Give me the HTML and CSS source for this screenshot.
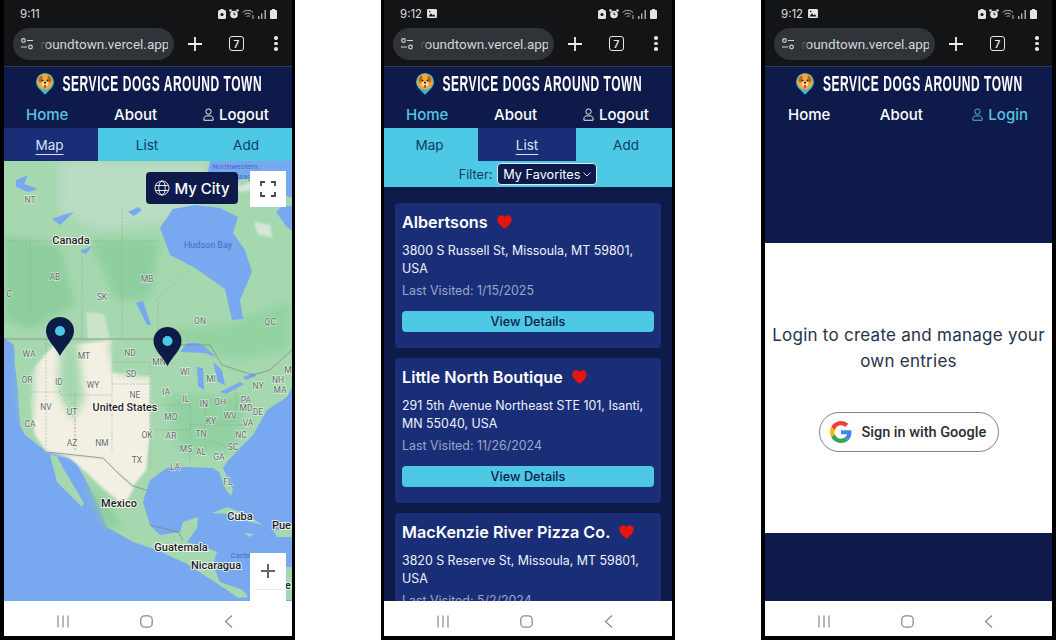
FILE: index.html
```html
<!DOCTYPE html>
<html lang="en">
<head>
    <meta charset="UTF-8">
    <meta name="viewport" content="width=device-width, initial-scale=1.0">
    <title>Service Dogs Around Town</title>
    <link rel="stylesheet" href="styles.css">
</head>
<body>
    <svg class="sprites" xmlns="http://www.w3.org/2000/svg">
        <symbol id="i-tune" viewBox="0 0 14 12">
            <circle cx="3.5" cy="2.5" r="1.8" fill="none" stroke="#cfd2d6" stroke-width="1.2"/>
            <path d="M7 2.5h6M1 9h6" stroke="#cfd2d6" stroke-width="1.2"/>
            <circle cx="10.5" cy="9" r="1.8" fill="none" stroke="#cfd2d6" stroke-width="1.2"/>
        </symbol>
        <symbol id="i-dog" viewBox="0 0 20 24">
            <path d="M10 24 2.6 16.500A10 10 0 1 1 17.400 16.500Z" fill="#3fb6c9"/>
            <circle cx="10" cy="9.500" r="8.600" fill="#f2a93b"/>
            <path d="M3 6c1.500-3 3-3.600 4-3 .6 2-.5 6-2.200 8C3.400 10.500 2.600 8 3 6ZM17 6c-1.500-3-3-3.600-4-3-.6 2 .5 6 2.200 8 1.400-.5 2.200-3 1.800-5Z" fill="#b9651f"/>
            <ellipse cx="10" cy="12" rx="3.600" ry="3" fill="#ffe1b0"/>
            <circle cx="7.200" cy="8" r="1" fill="#2a1608"/>
            <circle cx="12.800" cy="8" r="1" fill="#2a1608"/>
            <ellipse cx="10" cy="10.500" rx="1.300" ry="1" fill="#2a1608"/>
            <path d="M8.800 13h2.400v2.600a1.200 1.200 0 0 1-2.400 0Z" fill="#e4453f"/>
        </symbol>
        <symbol id="i-user" viewBox="0 0 12 14">
            <circle cx="6" cy="3.800" r="2.900" fill="none" stroke="currentColor" stroke-width="1"/>
            <path d="M1 13.300v-1.500c0-2.100 1.400-3.300 3-3.300h4c1.600 0 3 1.200 3 3.300v1.500Z" fill="none" stroke="currentColor" stroke-width="1"/>
        </symbol>
        <symbol id="i-heart" viewBox="0 0 16 15">
            <path d="M8 14.800C3 10.800 .3 8.200 .3 4.800.3 2.200 2.200.4 4.500.4 6 .4 7.300 1.200 8 2.400 8.700 1.200 10 .4 11.500.4c2.300 0 4.200 1.800 4.200 4.400 0 3.400-2.700 6-7.700 10Z" fill="#e8140f"/>
        </symbol>
        <symbol id="i-photo" viewBox="0 0 11 10">
            <rect width="11" height="10" rx="1.500" fill="#e6e6e6"/>
            <path d="M1.500 8.300 4.300 4.800l2 2.200 1.300-1.200 1.900 2.500Z" fill="#151515"/>
            <circle cx="3" cy="2.800" r=".9" fill="#151515"/>
        </symbol>
    </svg>

    <!-- map screen -->
    <section class="phone">
        <div class="status">
            <span class="clock">9:11</span>
            <span class="status-icons">
                <svg width="8" height="10" viewBox="0 0 8 10"><rect y="1" width="8" height="9" rx="1.500" fill="#e4e4e4"/><rect x="2.500" width="3" height="2" fill="#e4e4e4"/><circle cx="4" cy="5.500" r="1.600" fill="#151515"/></svg>
                <svg width="10" height="10" viewBox="0 0 10 10"><circle cx="5" cy="5.500" r="3.800" fill="#e4e4e4"/><circle cx="1.500" cy="1.500" r="1.300" fill="#e4e4e4"/><circle cx="8.500" cy="1.500" r="1.300" fill="#e4e4e4"/><path d="M5 3.500v2.200h1.500" stroke="#151515" fill="none"/></svg>
                <svg width="13" height="10" viewBox="0 0 13 10" fill="none" stroke="#bdbdbd"><path d="M.5 3.500C3.500.6 8 .6 11 3.500M2.500 5.500C4.500 3.700 7 3.700 9 5.500M4.500 7.500c1-.8 2.500-.8 3.500 0"/><path d="M11 6v4" stroke-width="1"/></svg>
                <svg width="9" height="10" viewBox="0 0 9 10"><path d="M0 10h1.500V7H0ZM3 10h1.500V4.500H3ZM6.500 10H8V1H6.500Z" fill="#a8a8a8"/></svg>
                <svg class="battery" width="7" height="10" viewBox="0 0 7 10"><rect y="1" width="7" height="9" rx="1" fill="#e4e4e4"/><rect x="2" width="3" height="2" fill="#e4e4e4"/></svg>
            </span>
        </div>
        <div class="toolbar">
            <div class="url">
                <svg class="url-icon"><use href="#i-tune"/></svg>
                <span class="url-text"><span>roundtown.vercel.app</span></span>
            </div>
            <svg class="plus" viewBox="0 0 14 14" stroke="#eee" stroke-width="1.800"><path d="M7 0v14M0 7h14"/></svg>
            <span class="tabs-count">7</span>
            <span class="dots"><i></i><i></i><i></i></span>
        </div>
        <div class="screen">
            <header class="brand">
                <svg class="logo"><use href="#i-dog"/></svg>
                <span class="brand-name">SERVICE DOGS AROUND TOWN</span>
            </header>
            <nav class="mainnav">
                <a class="active nav-home">Home</a>
                <a class="nav-about">About</a>
                <a class="nav-user"><svg class="user-icon"><use href="#i-user"/></svg>Logout</a>
            </nav>
            <div class="subtabs">
                <a class="subtab current"><u>Map</u></a>
                <a class="subtab">List</a>
                <a class="subtab">Add</a>
            </div>
            <div class="map">
                <svg class="map-art" viewBox="4 161 288 440" preserveAspectRatio="none">
                    <defs>
                        <filter id="soft"><feGaussianBlur stdDeviation="4"/></filter>
                        <filter id="softer"><feGaussianBlur stdDeviation="1.200"/></filter>
                        <filter id="edge"><feGaussianBlur stdDeviation=".5"/></filter>
                    </defs>
                    <rect x="4" y="161" width="288" height="440" fill="#78a8f0"/>
                    <!-- land -->
                    <g filter="url(#edge)" fill="#a6d8b0">
                        <path d="M4 161H292V387L287 397 267 410 263 417 253 435 240 448 227 462 223 468 233 490 231 496 226 490 219 472 213 468 187 467 167 468 150 480 146 492 143 502 150 525 160 535 180 532 183 522 198 517 197 528 187 542 207 548 217 552 213 565 220 582 243 590 248 597 238 598 227 590 207 577 187 564 157 550 133 542 107 527 100 507 77 464 66 456 53 452 47 452 25 435 20 425 18 390 15 365 14 345 4 338Z"/>
                        <path d="M50 455 57 482 82 507 84 503 63 468 57 456Z"/>
                        <path d="M212 513 227 507 243 513 263 525 250 522 232 514Z"/>
                        <path d="M273 531 292 526V537L277 537Z"/>
                        <path d="M244 533 254 534 250 537Z"/>
                        <path d="M286 567H292V600H286Z"/>
                    </g>
                    <!-- shading -->
                    <g filter="url(#soft)">
                        <path fill="#b9dcc4" d="M60 161H205V205L160 222 100 230 60 212Z"/>
                        <path fill="#8ecd9d" d="M4 235 60 245 75 305 30 330 4 320Z"/>
                        <path fill="#8fcf9f" d="M90 240H160L150 300 115 300Z"/>
                        <path fill="#93d2a1" d="M155 330 225 325 290 300V350L240 360 200 350Z"/>
                        <path fill="#92d1a2" d="M165 395H250L235 450 180 455Z"/>
                        <path fill="#8ecd9d" d="M85 480 105 500 125 530 105 525Z"/>
                    </g>
                    <path filter="url(#softer)" fill="#f4efe3" d="M30 372 52 347 112 340 112 372 150 376 150 432 146 470 133 486 104 459 47 452 35 435 30 405Z"/>
                    <path filter="url(#softer)" fill="#f4efe3" opacity=".5" d="M86 312 104 314 110 339 88 339Z"/>
                    <path filter="url(#softer)" fill="#f4efe3" d="M50 453 104 459 134 488 124 505 105 490 86 472 70 458Z"/>
                    <g filter="url(#soft)" fill="#a4d8ae">
                        <path d="M60 340 78 340 84 400 72 420 58 390Z"/>
                        <path d="M108 342H150V378L115 372Z"/>
                        <path d="M18 345 36 345 32 420 22 420Z"/>
                    </g>
                    <!-- water -->
                    <g fill="#78a8f0" filter="url(#edge)">
                        <path d="M173 209 160 228 170 255 195 268 225 289 232 320 243 319 240 300 252 272 245 250 233 233 238 217 220 208 196 205Z"/>
                        <path d="M210 161H292V198L270 190 250 178 225 182 208 172Z"/>
                        <path d="M276 212 282 206 292 206V231L286 226Z"/>
                        <path d="M16 180 28 175 24 184 38 189 28 192 16 187Z"/>
                        <path d="M52 219 66 214 74 212 60 225Z"/>
                        <path d="M80 251 92 246 86 254Z"/>
                        <path d="M136 303 143 301 151 325 147 325Z"/>
                        <path d="M187 343 198 343 205 347 216 357 205 353 180 352Z"/>
                        <path d="M197 367 203 368 204 390 198 386Z"/>
                        <path d="M213 362 222 370 225 385 218 382Z"/>
                        <path d="M220 392 240 382 244 384 226 394Z"/>
                        <path d="M243 377 254 373 256 376 246 380Z"/>
                        <path d="M128 212 138 207 142 210 134 216Z"/>
                    </g>
                    <path filter="url(#softer)" d="M232 180 240 186 250 182 256 190 240 192Z M254 222 270 225 272 238 258 234Z" fill="#d5e6d9"/>
                    <!-- borders -->
                    <g fill="none" stroke="#8c9c92" stroke-width=".5" stroke-dasharray="2 1.500">
                        <path d="M4 241H160M30 241V310M82 241V339M122 210V339M156 300 190 270M158 300V339"/>
                        <path d="M46 339V450M60 395H112M30 392H60M75 392V452M112 372V452M112 362H150M112 384H150M150 362V470M60 390 75 420M75 420V452M150 405H190M150 430H190M190 392V470M205 400V450M236 420 205 425M190 425H252M210 440 240 452M236 385V420"/>
                    </g>
                    <path d="M4 339H155L175 345 210 345 222 365 253 375 270 370 292 350M47 452 103 458 120 475 133 486 146 490M150 525 178 532 183 540" fill="none" stroke="#7d8478" stroke-width=".7"/>
                    <!-- labels -->
                    <g class="lbl-state">
                        <text x="30" y="203">NT</text><text x="55" y="280">AB</text><text x="147" y="282">MB</text><text x="102" y="300">SK</text><text x="200" y="324">ON</text><text x="270" y="325">QC</text><text x="9" y="297">C</text>
                        <text x="29" y="357">WA</text><text x="84" y="359">MT</text><text x="130" y="356">ND</text><text x="159" y="365">MN</text><text x="185" y="375">WI</text><text x="211" y="382">MI</text><text x="258" y="389">NY</text><text x="278" y="383">NH</text><text x="280" y="393">MA</text><text x="288" y="373">M</text>
                        <text x="27" y="383">OR</text><text x="59" y="385">ID</text><text x="93" y="388">WY</text><text x="131" y="377">SD</text><text x="166" y="395">IA</text><text x="186" y="402">IL</text><text x="204" y="407">IN</text><text x="220" y="405">OH</text><text x="246" y="403">PA</text><text x="246" y="411">MD</text><text x="258" y="415">DE</text><text x="135" y="398">NE</text><text x="46" y="410">NV</text><text x="72" y="415">UT</text><text x="171" y="420">MO</text><text x="230" y="419">WV</text><text x="211" y="424">KY</text><text x="248" y="426">VA</text><text x="30" y="427">CA</text>
                        <text x="72" y="446">AZ</text><text x="102" y="446">NM</text><text x="147" y="438">OK</text><text x="171" y="439">AR</text><text x="201" y="437">TN</text><text x="241" y="438">NC</text><text x="186" y="452">MS</text><text x="201" y="455">AL</text><text x="233" y="450">SC</text><text x="219" y="460">GA</text><text x="175" y="470">LA</text><text x="137" y="463">TX</text><text x="228" y="485">FL</text>
                    </g>
                    <g class="lbl-water">
                        <text x="235" y="169">Northwestern</text><text x="243" y="179">Passages</text>
                        <text x="208" y="248" class="big">Hudson Bay</text>
                        <text x="255" y="558">Caribbean Sea</text>
                    </g>
                    <g class="lbl-country">
                        <text x="71" y="244">Canada</text><text x="125" y="411" class="big">United States</text><text x="119" y="507">Mexico</text><text x="240" y="520">Cuba</text><text x="291" y="529" class="end">Pue</text><text x="181" y="551">Guatemala</text><text x="216" y="569">Nicaragua</text><text x="291" y="589" class="end">e</text>
                    </g>
                    <!-- pins -->
                    <path d="M60 317a14 14 0 0 1 14 14c0 9-9 15-14 25-5-10-14-16-14-25a14 14 0 0 1 14-14Z" fill="#0d1c45"/>
                    <circle cx="60" cy="331" r="5" fill="#4dc8e5"/>
                    <path d="M167.500 327a14 14 0 0 1 14 14c0 9-9 15-14 25-5-10-14-16-14-25a14 14 0 0 1 14-14Z" fill="#0d1c45"/>
                    <circle cx="167.500" cy="341" r="5" fill="#4dc8e5"/>
                </svg>
                <a class="mycity">
                    <svg width="16" height="16" viewBox="0 0 16 16" fill="none" stroke="#fff" stroke-width=".9"><circle cx="8" cy="8" r="7"/><ellipse cx="8" cy="8" rx="3.200" ry="7"/><path d="M1.600 5.500h12.800M1.600 10.500h12.800"/></svg>
                    My City
                </a>
                <div class="map-ctl fullscreen">
                    <svg width="16" height="16" viewBox="0 0 16 16" fill="none" stroke="#444" stroke-width="1.800"><path d="M1 5V1h4M11 1h4v4M15 11v4h-4M5 15H1v-4"/></svg>
                </div>
                <div class="map-ctl zoom">
                    <svg width="16" height="16" viewBox="0 0 16 16" fill="none" stroke="#666" stroke-width="2"><path d="M8 1v14M1 8h14"/></svg>
                </div>
            </div>
        </div>
        <div class="sysnav">
            <svg width="12" height="13" viewBox="0 0 12 13" stroke="#8b8b8b" stroke-width="1.200"><path d="M1 .5v12M6 .5v12M11 .5v12"/></svg>
            <svg width="13" height="13" viewBox="0 0 13 13" fill="none" stroke="#8b8b8b" stroke-width="1.300"><rect x=".8" y=".8" width="11.400" height="11.400" rx="3.800"/></svg>
            <svg width="9" height="13" viewBox="0 0 9 13" fill="none" stroke="#8b8b8b" stroke-width="1.200"><path d="M8 .5 1.500 6.500l6.500 6"/></svg>
        </div>
    </section>

    <!-- list screen -->
    <section class="phone phone-mid">
        <div class="status">
            <span class="clock">9:12<svg class="photo"><use href="#i-photo"/></svg></span>
            <span class="status-icons">
                <svg width="8" height="10" viewBox="0 0 8 10"><rect y="1" width="8" height="9" rx="1.500" fill="#e4e4e4"/><rect x="2.500" width="3" height="2" fill="#e4e4e4"/><circle cx="4" cy="5.500" r="1.600" fill="#151515"/></svg>
                <svg width="10" height="10" viewBox="0 0 10 10"><circle cx="5" cy="5.500" r="3.800" fill="#e4e4e4"/><circle cx="1.500" cy="1.500" r="1.300" fill="#e4e4e4"/><circle cx="8.500" cy="1.500" r="1.300" fill="#e4e4e4"/><path d="M5 3.500v2.200h1.500" stroke="#151515" fill="none"/></svg>
                <svg width="13" height="10" viewBox="0 0 13 10" fill="none" stroke="#bdbdbd"><path d="M.5 3.500C3.500.6 8 .6 11 3.500M2.500 5.500C4.500 3.700 7 3.700 9 5.500M4.500 7.500c1-.8 2.500-.8 3.500 0"/><path d="M11 6v4" stroke-width="1"/></svg>
                <svg width="9" height="10" viewBox="0 0 9 10"><path d="M0 10h1.500V7H0ZM3 10h1.500V4.500H3ZM6.500 10H8V1H6.500Z" fill="#a8a8a8"/></svg>
                <svg class="battery" width="7" height="10" viewBox="0 0 7 10"><rect y="1" width="7" height="9" rx="1" fill="#e4e4e4"/><rect x="2" width="3" height="2" fill="#e4e4e4"/></svg>
            </span>
        </div>
        <div class="toolbar">
            <div class="url">
                <svg class="url-icon"><use href="#i-tune"/></svg>
                <span class="url-text"><span>roundtown.vercel.app</span></span>
            </div>
            <svg class="plus" viewBox="0 0 14 14" stroke="#eee" stroke-width="1.800"><path d="M7 0v14M0 7h14"/></svg>
            <span class="tabs-count">7</span>
            <span class="dots"><i></i><i></i><i></i></span>
        </div>
        <div class="screen">
            <header class="brand">
                <svg class="logo"><use href="#i-dog"/></svg>
                <span class="brand-name">SERVICE DOGS AROUND TOWN</span>
            </header>
            <nav class="mainnav">
                <a class="active nav-home">Home</a>
                <a class="nav-about">About</a>
                <a class="nav-user"><svg class="user-icon"><use href="#i-user"/></svg>Logout</a>
            </nav>
            <div class="subtabs">
                <a class="subtab">Map</a>
                <a class="subtab current"><u>List</u></a>
                <a class="subtab">Add</a>
            </div>
            <div class="filter">
                <label>Filter:</label>
                <span class="select">My Favorites
                    <svg width="8" height="5" viewBox="0 0 8 5" fill="none" stroke="#d6dcef"><path d="M.5.5 4 4 7.500.5"/></svg>
                </span>
            </div>
            <div class="cards">
                <article class="card">
                    <h2>Albertsons<svg class="heart"><use href="#i-heart"/></svg></h2>
                    <p>3800 S Russell St, Missoula, MT 59801, USA</p>
                    <p class="visited">Last Visited: 1/15/2025</p>
                    <a class="details">View Details</a>
                </article>
                <article class="card">
                    <h2>Little North Boutique<svg class="heart"><use href="#i-heart"/></svg></h2>
                    <p>291 5th Avenue Northeast STE 101, Isanti, MN 55040, USA</p>
                    <p class="visited">Last Visited: 11/26/2024</p>
                    <a class="details">View Details</a>
                </article>
                <article class="card">
                    <h2>MacKenzie River Pizza Co.<svg class="heart"><use href="#i-heart"/></svg></h2>
                    <p>3820 S Reserve St, Missoula, MT 59801, USA</p>
                    <p class="visited">Last Visited: 5/2/2024</p>
                    <a class="details">View Details</a>
                </article>
            </div>
        </div>
        <div class="sysnav">
            <svg width="12" height="13" viewBox="0 0 12 13" stroke="#8b8b8b" stroke-width="1.200"><path d="M1 .5v12M6 .5v12M11 .5v12"/></svg>
            <svg width="13" height="13" viewBox="0 0 13 13" fill="none" stroke="#8b8b8b" stroke-width="1.300"><rect x=".8" y=".8" width="11.400" height="11.400" rx="3.800"/></svg>
            <svg width="9" height="13" viewBox="0 0 9 13" fill="none" stroke="#8b8b8b" stroke-width="1.200"><path d="M8 .5 1.500 6.500l6.500 6"/></svg>
        </div>
    </section>

    <!-- login screen -->
    <section class="phone phone-last">
        <div class="status">
            <span class="clock">9:12<svg class="photo"><use href="#i-photo"/></svg></span>
            <span class="status-icons">
                <svg width="8" height="10" viewBox="0 0 8 10"><rect y="1" width="8" height="9" rx="1.500" fill="#e4e4e4"/><rect x="2.500" width="3" height="2" fill="#e4e4e4"/><circle cx="4" cy="5.500" r="1.600" fill="#151515"/></svg>
                <svg width="10" height="10" viewBox="0 0 10 10"><circle cx="5" cy="5.500" r="3.800" fill="#e4e4e4"/><circle cx="1.500" cy="1.500" r="1.300" fill="#e4e4e4"/><circle cx="8.500" cy="1.500" r="1.300" fill="#e4e4e4"/><path d="M5 3.500v2.200h1.500" stroke="#151515" fill="none"/></svg>
                <svg width="13" height="10" viewBox="0 0 13 10" fill="none" stroke="#bdbdbd"><path d="M.5 3.500C3.500.6 8 .6 11 3.500M2.500 5.500C4.500 3.700 7 3.700 9 5.500M4.500 7.500c1-.8 2.500-.8 3.500 0"/><path d="M11 6v4" stroke-width="1"/></svg>
                <svg width="9" height="10" viewBox="0 0 9 10"><path d="M0 10h1.500V7H0ZM3 10h1.500V4.500H3ZM6.500 10H8V1H6.500Z" fill="#a8a8a8"/></svg>
                <svg class="battery" width="7" height="10" viewBox="0 0 7 10"><rect y="1" width="7" height="9" rx="1" fill="#e4e4e4"/><rect x="2" width="3" height="2" fill="#e4e4e4"/></svg>
            </span>
        </div>
        <div class="toolbar">
            <div class="url">
                <svg class="url-icon"><use href="#i-tune"/></svg>
                <span class="url-text"><span>roundtown.vercel.app</span></span>
            </div>
            <svg class="plus" viewBox="0 0 14 14" stroke="#eee" stroke-width="1.800"><path d="M7 0v14M0 7h14"/></svg>
            <span class="tabs-count">7</span>
            <span class="dots"><i></i><i></i><i></i></span>
        </div>
        <div class="screen">
            <header class="brand">
                <svg class="logo"><use href="#i-dog"/></svg>
                <span class="brand-name">SERVICE DOGS AROUND TOWN</span>
            </header>
            <nav class="mainnav nav-guest">
                <a>Home</a>
                <a>About</a>
                <a class="active"><svg class="user-icon"><use href="#i-user"/></svg>Login</a>
            </nav>
            <div class="login">
                <div class="login-panel">
                    <p>Login to create and manage your own entries</p>
                    <a class="google">
                        <svg width="22" height="22" viewBox="0 0 48 48">
                            <path fill="#EA4335" d="M24 9.500c3.500 0 6.700 1.200 9.200 3.600l6.900-6.900C35.900 2.400 30.500 0 24 0 14.600 0 6.500 5.400 2.600 13.200l8 6.200C12.500 13.600 17.800 9.500 24 9.500z"/>
                            <path fill="#4285F4" d="M46.900 24.500c0-1.600-.1-3.100-.4-4.500H24v9h12.900c-.6 3-2.200 5.500-4.700 7.200l7.700 6c4.500-4.200 7-10.300 7-17.700z"/>
                            <path fill="#FBBC05" d="M10.500 28.600c-.5-1.400-.8-3-.8-4.600s.3-3.200.8-4.600l-8-6.200C.9 16.500 0 20.100 0 24s.9 7.500 2.600 10.800l7.900-6.200z"/>
                            <path fill="#34A853" d="M24 48c6.500 0 11.900-2.100 15.900-5.800l-7.700-6c-2.200 1.400-4.900 2.300-8.200 2.300-6.200 0-11.500-4.200-13.400-9.800l-8 6.200C6.500 42.600 14.600 48 24 48z"/>
                        </svg>
                        Sign in with Google
                    </a>
                </div>
            </div>
        </div>
        <div class="sysnav">
            <svg width="12" height="13" viewBox="0 0 12 13" stroke="#8b8b8b" stroke-width="1.200"><path d="M1 .5v12M6 .5v12M11 .5v12"/></svg>
            <svg width="13" height="13" viewBox="0 0 13 13" fill="none" stroke="#8b8b8b" stroke-width="1.300"><rect x=".8" y=".8" width="11.400" height="11.400" rx="3.800"/></svg>
            <svg width="9" height="13" viewBox="0 0 9 13" fill="none" stroke="#8b8b8b" stroke-width="1.200"><path d="M8 .5 1.500 6.500l6.500 6"/></svg>
        </div>
    </section>
</body>
</html>
```

FILE: styles.css
```css
* {
    box-sizing: border-box;
}
html, body {
    height: 100%;
}
body {
    margin: 0;
    background-color: #fff;
    display: flex;
    gap: 86px;
    overflow: hidden;
    font-family: Inter, "Open Sans", sans-serif;
}
.sprites {
    display: none;
}
.phone {
    width: 295px;
    height: 640px;
    flex: none;
    background-color: #000;
    padding: 0 3px 4px 4px;
    display: flex;
    flex-direction: column;
}
.phone-mid {
    width: 294px;
    padding-left: 3px;
}
.phone-last {
    padding-right: 4px;
}

/* status bar + browser bar */
.status {
    height: 26px;
    background-color: #131416;
    display: flex;
    justify-content: space-between;
    align-items: center;
    padding: 1px 15px 0 16px;
    color: #ddd;
    font-size: 11.500px;
}
.clock {
    display: flex;
    align-items: center;
    gap: 5px;
}
.photo {
    width: 10px;
    height: 9px;
}
.status-icons {
    display: flex;
    align-items: center;
    gap: 3px;
}
.toolbar {
    height: 41px;
    background-color: #131416;
    border-bottom: 1px solid #2c3a5c;
    padding: 2px 0 7px 9px;
    display: flex;
    align-items: center;
}
.url {
    width: 161px;
    height: 32px;
    border-radius: 16px;
    background-color: #303338;
    display: flex;
    align-items: center;
    padding-left: 7px;
    color: #d3d5d8;
    flex: none;
}
.url-icon {
    width: 14px;
    height: 12px;
    flex: none;
}
.url-text {
    position: relative;
    overflow: hidden;
    margin-left: 6px;
    width: 128px;
    font-family: Roboto, sans-serif;
    font-size: 13.500px;
    white-space: nowrap;
}
.url-text::before {
    content: "";
    position: absolute;
    left: 0;
    top: 0;
    bottom: 0;
    width: 10px;
    background: linear-gradient(to right, #303338, rgba(48, 51, 56, 0));
}
.plus {
    flex: none;
    margin-left: 14px;
    width: 14px;
    height: 14px;
}
.tabs-count {
    flex: none;
    margin-left: 27px;
    width: 15px;
    height: 15px;
    border: 1.500px solid #e8e8e8;
    border-radius: 3px;
    color: #e8e8e8;
    font-size: 10px;
    font-weight: 600;
    display: flex;
    align-items: center;
    justify-content: center;
}
.dots {
    margin-left: 30px;
    display: flex;
    flex-direction: column;
    gap: 2px;
}
.dots i {
    width: 3.500px;
    height: 3.500px;
    border-radius: 50%;
    background-color: #e8e8e8;
}

/* site header */
.screen {
    flex: 1;
    min-height: 0;
    display: flex;
    flex-direction: column;
    background-color: #0e1b4a;
}
.brand {
    height: 33px;
    flex: none;
    display: flex;
    align-items: center;
    justify-content: center;
    gap: 9px;
}
.logo {
    width: 18px;
    height: 22px;
    flex: none;
}
.brand-name {
    flex: none;
    width: 198px;
    text-align: center;
    white-space: nowrap;
    color: #fff;
    font-family: "Liberation Sans", sans-serif;
    font-weight: 700;
    font-size: 12px;
    line-height: 24px;
    letter-spacing: .55px;
    transform: scaleY(1.850);
}
.mainnav {
    height: 28px;
    flex: none;
    display: flex;
    justify-content: space-between;
    align-items: center;
    padding: 0 23px 0 22px;
    color: #fff;
    font-size: 15px;
    font-weight: 500;
}
.nav-guest {
    padding: 0 24px 0 23px;
}
.mainnav a {
    display: flex;
    align-items: center;
    gap: 5px;
}
.mainnav .active {
    color: #58c3e3;
}
.user-icon {
    width: 11px;
    height: 13px;
}
.subtabs {
    height: 33px;
    flex: none;
    display: flex;
    background-color: #4dc8e5;
    color: #143a63;
    font-size: 13.500px;
}
.subtab {
    flex: none;
    width: 98px;
    display: flex;
    align-items: center;
    justify-content: center;
}
.subtab:first-child {
    width: 94px;
    padding-right: 3px;
}
.subtab:last-child {
    width: 96px;
    padding-left: 4px;
}
.subtab.current {
    background-color: #1a2e78;
    color: #d8e4f6;
}
.subtab u {
    text-decoration-thickness: 1px;
    text-underline-offset: 4px;
}

/* map */
.map {
    flex: 1;
    min-height: 0;
    position: relative;
    overflow: hidden;
}
.map-art {
    display: block;
    width: 100%;
    height: 100%;
    font-family: Roboto, sans-serif;
}
.lbl-state text {
    font-size: 8.500px;
    fill: #636b66;
    text-anchor: middle;
    paint-order: stroke;
    stroke: rgba(255, 255, 255, .55);
    stroke-width: 1.500px;
}
.lbl-water text {
    font-size: 7.500px;
    fill: #3f6fc4;
    text-anchor: middle;
}
.lbl-water .big {
    font-size: 9px;
}
.lbl-country text {
    font-size: 11px;
    font-weight: 500;
    fill: #1f1f1f;
    text-anchor: middle;
    paint-order: stroke;
    stroke: rgba(255, 255, 255, .8);
    stroke-width: 2px;
}
.lbl-country .big {
    font-size: 10.800px;
}
.lbl-country .end {
    text-anchor: end;
}
.mycity {
    position: absolute;
    left: 142px;
    top: 11px;
    width: 92px;
    height: 32px;
    background-color: #0e1b4a;
    border-radius: 4px;
    color: #fff;
    font-size: 15px;
    font-weight: 500;
    display: flex;
    align-items: center;
    justify-content: center;
    gap: 4px;
}
.map-ctl {
    position: absolute;
    left: 246px;
    width: 36px;
    background-color: #fff;
    display: flex;
    align-items: center;
    justify-content: center;
}
.fullscreen {
    top: 10px;
    height: 36px;
}
.zoom {
    bottom: 0;
    height: 48px;
    padding-bottom: 12px;
}
.zoom::after {
    content: "";
    position: absolute;
    left: 4px;
    right: 4px;
    bottom: 11px;
    height: 1px;
    background-color: #e6e6e6;
}

/* list */
.filter {
    height: 26px;
    flex: none;
    background-color: #4dc8e5;
    display: flex;
    align-items: center;
    justify-content: center;
    gap: 5px;
    font-size: 12.700px;
    color: #143a63;
}
.select {
    height: 22px;
    padding: 0 5px;
    background-color: #0e1b4a;
    border: 1px solid #dfeaf2;
    border-radius: 4px;
    color: #fff;
    display: flex;
    align-items: center;
    gap: 3px;
}
.cards {
    flex: 1;
    min-height: 0;
    overflow: hidden;
    padding: 16px 11px 0;
    display: flex;
    flex-direction: column;
    gap: 10px;
}
.card {
    flex: none;
    height: 145px;
    padding: 8px 7px 0;
    background-color: #1a2e78;
    border-radius: 4px;
    color: #eef2fb;
}
.card h2 {
    margin: 0;
    height: 22px;
    display: flex;
    align-items: center;
    gap: 9px;
    font-size: 16.200px;
    font-weight: 600;
    color: #fff;
}
.heart {
    width: 15px;
    height: 14px;
}
.card p {
    margin: 9px 0 0;
    font-size: 12.400px;
    line-height: 18px;
}
.card .visited {
    margin-top: 4px;
    color: #9aa5c9;
}
.details {
    margin-top: 11px;
    height: 21px;
    display: flex;
    align-items: center;
    justify-content: center;
    border-radius: 4px;
    background-color: #4dc8e5;
    color: #0e1b4a;
    font-size: 12.700px;
    font-weight: 500;
}

/* login */
.login {
    flex: 1;
    padding-top: 115px;
    background-color: #0e1b4a;
}
.login-panel {
    height: 290px;
    background-color: #fff;
    padding-top: 79px;
    display: flex;
    flex-direction: column;
    align-items: center;
    color: #26324a;
}
.login-panel p {
    margin: 0 0 38px;
    padding: 0 6px;
    text-align: center;
    font-size: 17px;
    letter-spacing: .25px;
    line-height: 26px;
}
.google {
    width: 180px;
    height: 40px;
    border: 1px solid #80868b;
    border-radius: 20px;
    display: flex;
    align-items: center;
    gap: 10px;
    padding-left: 10px;
    color: #2a2d31;
    font-family: Roboto, sans-serif;
    font-size: 14.500px;
    font-weight: 500;
}

/* android buttons */
.sysnav {
    height: 35px;
    flex: none;
    background-color: #fff;
    display: flex;
    align-items: center;
    justify-content: space-between;
    padding: 6px 59px 0 53px;
}
```
